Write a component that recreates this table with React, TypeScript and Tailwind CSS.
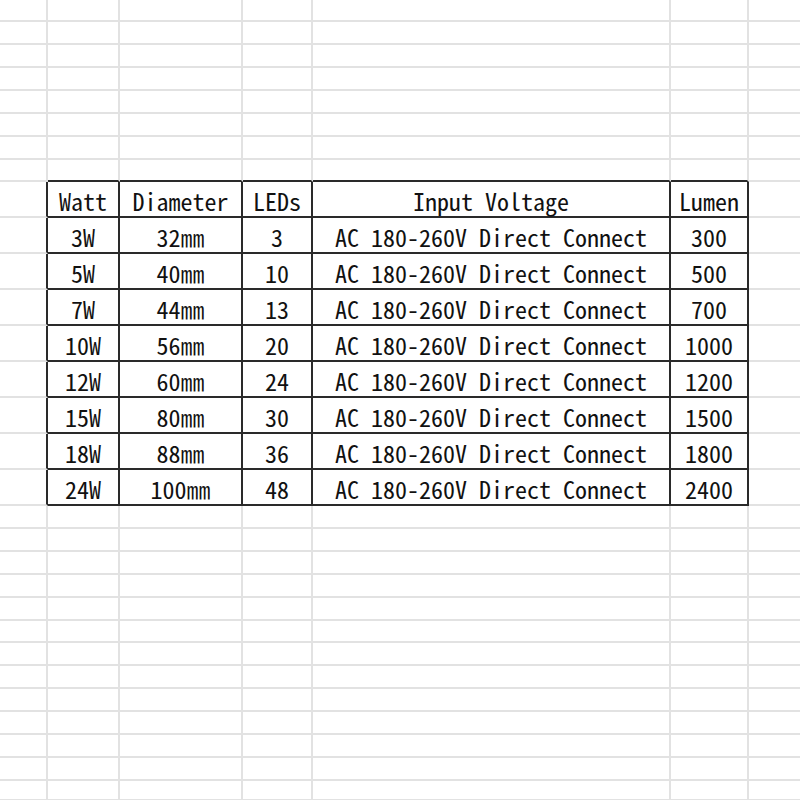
const COLS = [48, 72, 123, 70, 358, 78];

const TOP_ROWS = [22, 23, 23, 23, 23, 23, 23, 22];
const BOTTOM_ROWS = [23, 23, 23, 23, 23, 22, 23, 23, 23, 23, 23, 23, 20];

const HEADER = ['Watt', 'Diameter', 'LEDs', 'Input Voltage', 'Lumen'];

const DATA: string[][] = [
  ['3W', '32㎜', '3', 'AC 180-260V Direct Connect', '300'],
  ['5W', '40㎜', '10', 'AC 180-260V Direct Connect', '500'],
  ['7W', '44㎜', '13', 'AC 180-260V Direct Connect', '700'],
  ['10W', '56㎜', '20', 'AC 180-260V Direct Connect', '1000'],
  ['12W', '60㎜', '24', 'AC 180-260V Direct Connect', '1200'],
  ['15W', '80㎜', '30', 'AC 180-260V Direct Connect', '1500'],
  ['18W', '88㎜', '36', 'AC 180-260V Direct Connect', '1800'],
  ['24W', '100㎜', '48', 'AC 180-260V Direct Connect', '2400'],
];

// plain sheet row, optionally with a dark bottom edge under the table columns
function SheetRow({ h, darkBottom }: { h: number; darkBottom?: boolean }) {
  return (
    <div className="flex" style={{ height: h }}>
      {COLS.map((w, i) => (
        <div
          key={i}
          className={
            'shrink-0 border-r-2 border-b-2 border-r-[#e2e2e2] ' +
            (darkBottom && i > 0 ? 'border-b-[#2a2a2a]' : 'border-b-[#e2e2e2]')
          }
          style={{ width: w }}
        />
      ))}
      <div className="flex-1 border-b-2 border-b-[#e2e2e2]" />
    </div>
  );
}

function TableRow({ cells, last }: { cells: string[]; last?: boolean }) {
  return (
    <div className="flex h-[36px]">
      <div className="w-[48px] shrink-0 border-r-2 border-b-2 border-r-[#2a2a2a] border-b-[#e2e2e2]" />
      {cells.map((c, i) => (
        <div
          key={i}
          className="flex shrink-0 items-center justify-center border-r-2 border-b-2 border-[#2a2a2a] pt-[3px] text-[24px] leading-none text-[#111] [font-feature-settings:'hwid'] whitespace-nowrap"
          style={{ width: COLS[i + 1] }}
        >
          {c}
        </div>
      ))}
      <div className="flex-1 border-b-2 border-b-[#e2e2e2]" />
      {last ? null : null}
    </div>
  );
}

export default function App() {
  return (
    <div
      className="h-[800px] w-[800px] overflow-hidden bg-white"
      style={{ fontFamily: '"Noto Sans CJK JP", "Noto Sans", sans-serif' }}
    >
      {TOP_ROWS.map((h, i) => (
        <SheetRow key={'t' + i} h={h} darkBottom={i === TOP_ROWS.length - 1} />
      ))}
      <TableRow cells={HEADER} />
      {DATA.map((r, i) => (
        <TableRow key={i} cells={r} last={i === DATA.length - 1} />
      ))}
      {BOTTOM_ROWS.map((h, i) => (
        <SheetRow key={'b' + i} h={h} />
      ))}
    </div>
  );
}
